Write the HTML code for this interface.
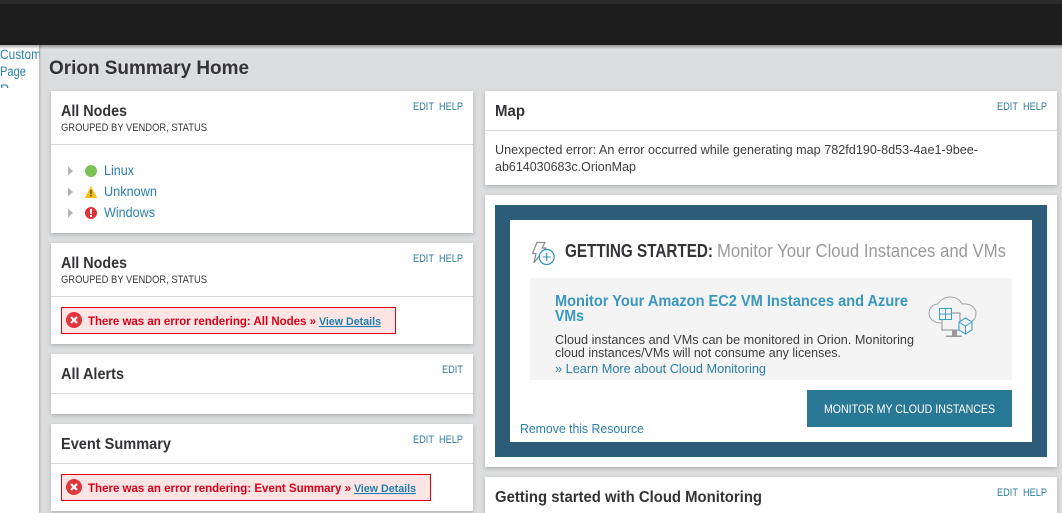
<!DOCTYPE html>
<html><head><meta charset="utf-8"><title>Orion Summary Home</title>
<style>
html,body{margin:0;padding:0;width:1062px;height:513px;overflow:hidden;background:#dcddde}
svg{display:block;position:absolute;left:0;top:0}
text{font-family:"Liberation Sans","DejaVu Sans",sans-serif;font-size:13px;fill:#3d3d3d}
.h{font-weight:bold;font-size:16px;fill:#333338}
.sub{font-size:11px;fill:#3a3a3a}
.act{font-size:11px;fill:#2f7d9c}
.lnk{font-size:13.500px;fill:#2b80aa}
.err{font-weight:bold;font-size:12px;fill:#d9001b}
.vd{font-weight:bold;font-size:11px;fill:#1f7fae;text-decoration:underline}
</style></head><body>
<svg width="1062" height="513" viewBox="0 0 1062 513" xmlns="http://www.w3.org/2000/svg">
<defs>
<filter id="s" x="-5%" y="-10%" width="110%" height="125%"><feDropShadow dx="0" dy="1.500" stdDeviation="2" flood-color="#000" flood-opacity=".22"/></filter>
<linearGradient id="tb" x1="0" y1="0" x2="0" y2="1"><stop offset="0" stop-color="#000" stop-opacity=".35"/><stop offset="1" stop-color="#000" stop-opacity="0"/></linearGradient>
<linearGradient id="lb" x1="0" y1="0" x2="1" y2="0"><stop offset="0" stop-color="#b9babb"/><stop offset="1" stop-color="#dcddde"/></linearGradient>
<clipPath id="side"><rect x="0" y="45" width="39.500" height="43"/></clipPath>
</defs>
<rect width="1062" height="513" fill="#dcddde"/>
<rect x="0" y="45" width="39" height="468" fill="#fff"/>
<rect x="39" y="45" width="3" height="468" fill="url(#lb)"/>
<g clip-path="url(#side)">
<text x="0" y="59" class="lnk" textLength="41" lengthAdjust="spacingAndGlyphs">Custom</text>
<text x="0" y="76" class="lnk" textLength="26" lengthAdjust="spacingAndGlyphs">Page</text>
<text x="0" y="94" class="lnk">P</text>
</g>
<rect x="0" y="45" width="1062" height="4" fill="url(#tb)"/>
<rect x="0" y="0" width="1062" height="45" fill="#1d1d1d"/>
<rect x="0" y="0" width="1062" height="4" fill="#2b2b2b"/>
<text x="49" y="74" style="font-size:19px;font-weight:bold;fill:#333338" textLength="200" lengthAdjust="spacingAndGlyphs">Orion Summary Home</text>

<!-- Card 1 -->
<rect x="51" y="91" width="422" height="142" fill="#fff" filter="url(#s)"/>
<rect x="51" y="144" width="422" height="1" fill="#d9d9d9"/>
<text x="61" y="116" class="h" textLength="66" lengthAdjust="spacingAndGlyphs">All Nodes</text>
<text x="61" y="131" class="sub" textLength="146" lengthAdjust="spacingAndGlyphs">GROUPED BY VENDOR, STATUS</text>
<text x="413" y="110" class="act" textLength="21" lengthAdjust="spacingAndGlyphs">EDIT</text>
<text x="439" y="110" class="act" textLength="24" lengthAdjust="spacingAndGlyphs">HELP</text>
<path d="M68 166.500l5 4.500-5 4.500z" fill="#b5b5b5"/>
<circle cx="91" cy="171" r="6" fill="#78c257"/>
<text x="104" y="175" class="lnk" textLength="30" lengthAdjust="spacingAndGlyphs">Linux</text>
<path d="M68 187.500l5 4.500-5 4.500z" fill="#b5b5b5"/>
<path d="M91 186l6.200 12h-12.400z" fill="#f7bd0f"/>
<rect x="90.300" y="190" width="1.400" height="4.200" fill="#444"/><rect x="90.300" y="195" width="1.400" height="1.400" fill="#444"/>
<text x="104" y="196" class="lnk" textLength="53" lengthAdjust="spacingAndGlyphs">Unknown</text>
<path d="M68 208.500l5 4.500-5 4.500z" fill="#b5b5b5"/>
<circle cx="91" cy="213" r="6" fill="#e0333a"/>
<rect x="90" y="209" width="2" height="5" fill="#fff"/><rect x="90" y="215" width="2" height="2" fill="#fff"/>
<text x="104" y="217" class="lnk" textLength="51" lengthAdjust="spacingAndGlyphs">Windows</text>

<!-- Card 2 -->
<rect x="51" y="243" width="422" height="101" fill="#fff" filter="url(#s)"/>
<rect x="51" y="296" width="422" height="1" fill="#d9d9d9"/>
<text x="61" y="268" class="h" textLength="66" lengthAdjust="spacingAndGlyphs">All Nodes</text>
<text x="61" y="283" class="sub" textLength="146" lengthAdjust="spacingAndGlyphs">GROUPED BY VENDOR, STATUS</text>
<text x="413" y="262" class="act" textLength="21" lengthAdjust="spacingAndGlyphs">EDIT</text>
<text x="439" y="262" class="act" textLength="24" lengthAdjust="spacingAndGlyphs">HELP</text>
<rect x="61.500" y="307.500" width="334" height="26" fill="#fee5e3" stroke="#e0000f"/>
<circle cx="74" cy="320" r="8" fill="#e1353c"/>
<path d="M71 317l6 6m0-6l-6 6" stroke="#fff" stroke-width="2.200" fill="none"/>
<text x="88" y="325" class="err" textLength="228" lengthAdjust="spacingAndGlyphs">There was an error rendering: All Nodes »</text>
<text x="319" y="325" class="vd" textLength="62" lengthAdjust="spacingAndGlyphs">View Details</text>

<!-- Card 3 -->
<rect x="51" y="354" width="422" height="60" fill="#fff" filter="url(#s)"/>
<rect x="51" y="393" width="422" height="1" fill="#d9d9d9"/>
<text x="61" y="379" class="h" textLength="63" lengthAdjust="spacingAndGlyphs">All Alerts</text>
<text x="442" y="373" class="act" textLength="21" lengthAdjust="spacingAndGlyphs">EDIT</text>

<!-- Card 4 -->
<rect x="51" y="424" width="422" height="87" fill="#fff" filter="url(#s)"/>
<rect x="51" y="463" width="422" height="1" fill="#d9d9d9"/>
<text x="61" y="449" class="h" textLength="110" lengthAdjust="spacingAndGlyphs">Event Summary</text>
<text x="413" y="443" class="act" textLength="21" lengthAdjust="spacingAndGlyphs">EDIT</text>
<text x="439" y="443" class="act" textLength="24" lengthAdjust="spacingAndGlyphs">HELP</text>
<rect x="61.500" y="474.500" width="369" height="26" fill="#fee5e3" stroke="#e0000f"/>
<circle cx="74" cy="487" r="8" fill="#e1353c"/>
<path d="M71 484l6 6m0-6l-6 6" stroke="#fff" stroke-width="2.200" fill="none"/>
<text x="88" y="492" class="err" textLength="263" lengthAdjust="spacingAndGlyphs">There was an error rendering: Event Summary »</text>
<text x="354" y="492" class="vd" textLength="62" lengthAdjust="spacingAndGlyphs">View Details</text>

<!-- Map -->
<rect x="485" y="91" width="572" height="94" fill="#fff" filter="url(#s)"/>
<rect x="485" y="130" width="572" height="1" fill="#d9d9d9"/>
<text x="495" y="116" class="h" textLength="30" lengthAdjust="spacingAndGlyphs">Map</text>
<text x="997" y="110" class="act" textLength="21" lengthAdjust="spacingAndGlyphs">EDIT</text>
<text x="1023" y="110" class="act" textLength="24" lengthAdjust="spacingAndGlyphs">HELP</text>
<text x="495" y="154" textLength="483" lengthAdjust="spacingAndGlyphs">Unexpected error: An error occurred while generating map 782fd190-8d53-4ae1-9bee-</text>
<text x="495" y="171" textLength="141" lengthAdjust="spacingAndGlyphs">ab614030683c.OrionMap</text>

<!-- Getting started -->
<rect x="485" y="195" width="572" height="272" fill="#fff" filter="url(#s)"/>
<rect x="495" y="205" width="552" height="252" fill="#2d5c78"/>
<rect x="510" y="220" width="522" height="222" fill="#fff"/>
<path d="M537 242.500h8l-3 5.500h4l-12 14.500 2-9h-3.500z" fill="none" stroke="#8a8a8a" stroke-width="1.200" stroke-linejoin="round"/>
<circle cx="546.700" cy="257" r="7.500" fill="#fff" stroke="#2b93bb" stroke-width="1.200"/>
<path d="M546.700 253v8m-4-4h8" stroke="#2b93bb" stroke-width="1.100"/>
<text x="565" y="257" style="font-size:18.500px;font-weight:bold;fill:#333338" textLength="148" lengthAdjust="spacingAndGlyphs">GETTING STARTED:</text>
<text x="717" y="257" style="font-size:18.500px;fill:#9a9a9e" textLength="289" lengthAdjust="spacingAndGlyphs">Monitor Your Cloud Instances and VMs</text>
<rect x="530" y="278" width="482" height="102" fill="#f4f4f4"/>
<text x="555" y="306" style="font-size:15.500px;font-weight:bold;fill:#3a97bd" textLength="353" lengthAdjust="spacingAndGlyphs">Monitor Your Amazon EC2 VM Instances and Azure</text>
<text x="555" y="321" style="font-size:15.500px;font-weight:bold;fill:#3a97bd" textLength="29" lengthAdjust="spacingAndGlyphs">VMs</text>
<text x="555" y="344" textLength="359" lengthAdjust="spacingAndGlyphs">Cloud instances and VMs can be monitored in Orion. Monitoring</text>
<text x="555" y="357" textLength="286" lengthAdjust="spacingAndGlyphs">cloud instances/VMs will not consume any licenses.</text>
<text x="555" y="373" class="lnk" style="font-size:13px" textLength="211" lengthAdjust="spacingAndGlyphs">» Learn More about Cloud Monitoring</text>
<path d="M941 323c-7 0-12-4-12-10 0-5 4-9 9-9 2-4 7-7 12-7 6 0 10 3 12 7 7-1 14 3 14 9 0 6-4 9-9 10" fill="none" stroke="#a3a3a3" stroke-width="1"/>
<path d="M942 313h18v17h-18z" fill="none" stroke="#8c8c8c" stroke-width="1"/>
<rect x="939.500" y="308.500" width="12" height="11" fill="#f4f4f4" stroke="#3fa0c6"/>
<path d="M945.500 308.500v11M939.500 314h12" stroke="#3fa0c6"/>
<rect x="952" y="330" width="5" height="5.500" fill="#999"/><rect x="946" y="335.500" width="16" height="1.500" fill="#999"/>
<path d="M965.500 318l6.500 4v8l-6.500 4-6.500-4v-8z" fill="#f4f4f4" stroke="#3fa0c6" stroke-width="1.100"/>
<path d="M959 322l6.500 4 6.500-4M965.500 326v8" fill="none" stroke="#3fa0c6"/>
<rect x="807" y="390" width="205" height="37" fill="#297896"/>
<text x="824" y="413" style="font-size:12px;fill:#fff" textLength="171" lengthAdjust="spacingAndGlyphs">MONITOR MY CLOUD INSTANCES</text>
<text x="520" y="433" class="lnk" style="font-size:13px" textLength="124" lengthAdjust="spacingAndGlyphs">Remove this Resource</text>

<!-- Last -->
<rect x="485" y="477" width="572" height="50" fill="#fff" filter="url(#s)"/>
<text x="495" y="502" class="h" textLength="267" lengthAdjust="spacingAndGlyphs">Getting started with Cloud Monitoring</text>
<text x="997" y="496" class="act" textLength="21" lengthAdjust="spacingAndGlyphs">EDIT</text>
<text x="1023" y="496" class="act" textLength="24" lengthAdjust="spacingAndGlyphs">HELP</text>
</svg>
</body></html>
